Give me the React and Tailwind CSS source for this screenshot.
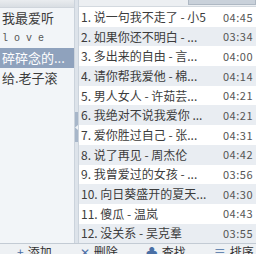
import React from 'react';

const lists = [
  { name: '我最爱听' },
  { name: 'l o v e', mono: true },
  { name: '碎碎念的...', selected: true },
  { name: '给.老子滚' },
];

const songs = [
  ['说一句我不走了 - 小5', '04:45'],
  ['如果你还不明白 - ...', '03:34'],
  ['多出来的自由 - 言...', '04:00'],
  ['请你帮我爱他 - 棉...', '04:14'],
  ['男人女人 - 许茹芸...', '04:21'],
  ['我绝对不说我爱你 ...', '04:21'],
  ['爱你胜过自己 - 张...', '04:31'],
  ['说了再见 - 周杰伦', '04:42'],
  ['我曾爱过的女孩 - ...', '03:56'],
  ['向日葵盛开的夏天...', '04:30'],
  ['傻瓜 - 温岚', '04:43'],
  ['没关系 - 吴克羣', '03:55'],
];

const tools = [
  ['+', '添加'],
  ['✕', '删除'],
  ['♣', '查找'],
  ['≡', '排序'],
];

export default function App() {
  return (
    <div className="w-[256px] h-[254px] overflow-hidden bg-white font-['Noto_Sans_CJK_SC',sans-serif] text-[#3c3c3c]">
      <div className="flex h-[243px]">
        {/* playlists */}
        <div className="w-[74px] flex flex-col bg-[#f2f5f8]">
          <div className="h-[8px] shrink-0 bg-gradient-to-b from-[#e9ecef] to-[#d9dee3] border-b border-[#cfd5dc]" />
          {lists.map((l) => (
            <div
              key={l.name}
              className={`h-[20px] flex items-center pl-[2px] whitespace-nowrap overflow-hidden ${
                l.selected ? 'bg-[#8fa2bd] text-white' : ''
              } ${l.mono ? "font-['Liberation_Mono',monospace] text-[10px] text-[#555]" : 'text-[13px]'}`}
            >
              {l.name}
            </div>
          ))}
        </div>

        {/* splitter */}
        <div className="w-[5px] flex flex-col bg-[#dde3ea] border-x border-[#cbd3dc] pt-[112px]">
          <div className="h-[30px] bg-[#a7b6c9] flex items-center justify-center">
            <svg width="3" height="5" viewBox="0 0 3 5">
              <path d="M3 0 L0 2.5 L3 5 Z" fill="#eef2f6" />
            </svg>
          </div>
        </div>

        {/* songs */}
        <div className="flex-1 flex flex-col min-w-0 overflow-hidden">
          <div className="h-[7px] shrink-0 flex justify-end bg-[#eceff2] border-b border-[#d3d9df]">
            <div className="w-[68px] h-[5px] bg-[#c9d1da] border-x border-b border-[#aeb8c3]" />
          </div>
          {songs.map(([title, time], i) => (
            <div
              key={i}
              className={`h-[19.7px] shrink-0 flex items-center gap-1 pl-[2px] pr-[3px] text-[12px] whitespace-nowrap ${
                i % 2 ? 'bg-[#e9edf2]' : 'bg-white'
              }`}
            >
              <span className="flex-1 min-w-0 overflow-hidden">
                {i + 1}. {title}
              </span>
              <span className="shrink-0 text-[#555] text-[11px] tracking-[0.5px]">{time}</span>
            </div>
          ))}
        </div>
      </div>

      {/* toolbar */}
      <div className="h-[24px] flex items-start bg-[#eef1f4] border-t border-[#c3cbd4] pl-[17px] gap-[28px] text-[12px] leading-[16px] text-[#333]">
        {tools.map(([icon, label]) => (
          <div key={label} className="flex items-center gap-[4px]">
            <span className="text-[#4a6fa5]">{icon}</span>
            <span>{label}</span>
          </div>
        ))}
      </div>
    </div>
  );
}
